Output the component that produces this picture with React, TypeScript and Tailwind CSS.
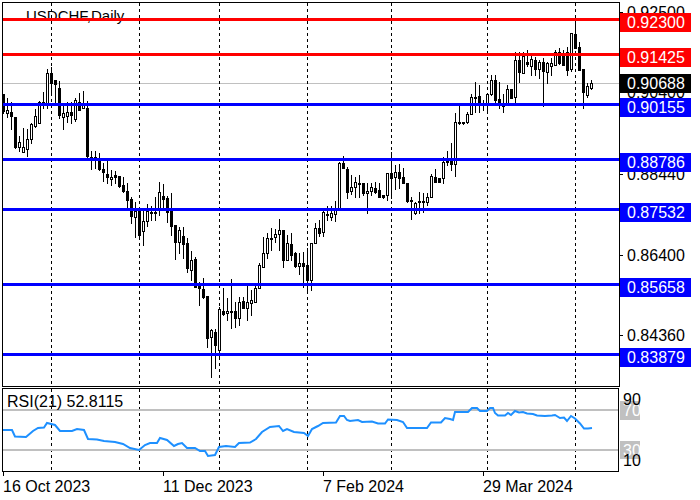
import React from "react";

// [high, bodyTop, bodyBottom, low, filled] in page pixels, first candle at x=3, then every 4px
type Candle = [number, number, number, number, number];

const candles: Candle[] = [
  [94, 94, 111, 113, 1], [98, 110, 113, 117, 0], [102, 112, 116, 129, 1], [117, 117, 147, 148, 1],
  [136, 142, 147, 151, 0], [128, 147, 152, 152, 0], [129, 139, 149, 156, 0], [123, 124, 139, 143, 0],
  [109, 116, 126, 127, 0], [101, 102, 123, 123, 0], [92, 102, 105, 108, 0], [69, 73, 103, 108, 0],
  [67, 73, 83, 93, 1], [80, 80, 84, 102, 1], [81, 88, 115, 118, 1], [105, 113, 117, 129, 0],
  [102, 112, 116, 122, 0], [102, 112, 115, 123, 1], [98, 100, 119, 121, 0], [93, 102, 110, 110, 1],
  [91, 105, 108, 108, 0], [101, 108, 156, 157, 1], [151, 157, 159, 169, 1], [151, 157, 160, 168, 0],
  [153, 160, 169, 170, 1], [163, 169, 172, 181, 1], [160, 174, 177, 183, 1], [170, 177, 179, 185, 0],
  [171, 175, 177, 183, 1], [176, 176, 186, 187, 1], [177, 185, 191, 192, 1], [183, 191, 200, 207, 1],
  [197, 199, 216, 223, 1], [202, 211, 217, 237, 0], [209, 211, 235, 238, 1], [211, 221, 231, 245, 0],
  [204, 211, 221, 226, 0], [206, 212, 213, 220, 1], [197, 212, 213, 220, 1], [182, 192, 208, 215, 0],
  [184, 196, 199, 208, 1], [196, 198, 212, 222, 1], [193, 211, 226, 235, 1], [225, 225, 242, 259, 1],
  [227, 230, 242, 253, 0], [227, 236, 244, 258, 1], [238, 243, 268, 272, 1], [251, 260, 270, 280, 0],
  [257, 259, 287, 287, 1], [282, 285, 288, 305, 1], [278, 289, 297, 298, 1], [296, 296, 338, 347, 1],
  [329, 330, 337, 377, 0], [329, 332, 345, 368, 1], [307, 309, 350, 357, 0], [288, 311, 314, 315, 1],
  [298, 311, 313, 320, 0], [279, 311, 312, 328, 1], [302, 311, 318, 327, 1], [297, 302, 318, 325, 0],
  [297, 301, 308, 308, 1], [286, 302, 308, 320, 0], [290, 300, 303, 315, 0], [286, 288, 302, 302, 0],
  [263, 265, 288, 288, 0], [237, 253, 267, 267, 0], [233, 238, 253, 258, 0], [228, 238, 239, 250, 1],
  [229, 234, 237, 242, 0], [219, 230, 234, 250, 0], [230, 230, 260, 267, 1], [235, 243, 260, 260, 0],
  [233, 244, 255, 260, 1], [252, 253, 266, 267, 1], [253, 263, 266, 274, 0], [252, 263, 266, 287, 1],
  [248, 265, 280, 290, 1], [243, 243, 280, 290, 0], [223, 228, 243, 243, 0], [220, 228, 233, 236, 1],
  [211, 212, 232, 236, 0], [206, 214, 215, 220, 1], [206, 213, 217, 220, 0], [201, 210, 214, 221, 0],
  [162, 163, 208, 210, 0], [156, 163, 168, 168, 1], [167, 169, 192, 198, 1], [175, 187, 191, 194, 0],
  [177, 182, 187, 197, 0], [175, 183, 184, 197, 1], [183, 183, 193, 195, 1], [183, 191, 193, 213, 0],
  [183, 187, 191, 195, 0], [182, 188, 192, 193, 1], [183, 190, 197, 197, 1], [195, 195, 197, 198, 1],
  [173, 173, 195, 200, 0], [152, 173, 178, 198, 1], [165, 172, 177, 189, 0], [164, 172, 178, 188, 1],
  [168, 177, 183, 183, 1], [183, 183, 201, 202, 1], [197, 200, 201, 219, 1], [202, 203, 213, 214, 0],
  [192, 201, 202, 213, 1], [193, 201, 202, 212, 1], [193, 197, 202, 205, 0], [174, 176, 197, 197, 0],
  [169, 177, 182, 182, 1], [178, 178, 182, 182, 1], [157, 162, 178, 183, 0], [151, 161, 162, 165, 1],
  [143, 161, 164, 170, 1], [113, 122, 164, 176, 0], [106, 122, 123, 124, 1], [122, 122, 123, 124, 1],
  [112, 114, 122, 123, 0], [94, 97, 114, 114, 0], [82, 97, 98, 112, 1], [85, 96, 103, 112, 1],
  [100, 103, 105, 110, 1], [93, 94, 105, 111, 0], [75, 80, 94, 95, 0], [75, 80, 100, 102, 1],
  [82, 99, 105, 108, 1], [94, 105, 106, 112, 1], [85, 89, 105, 105, 0], [89, 89, 98, 98, 1],
  [52, 60, 97, 102, 0], [52, 60, 72, 82, 1], [52, 56, 73, 73, 0], [50, 62, 64, 66, 1],
  [55, 59, 66, 75, 0], [57, 60, 69, 75, 1], [60, 62, 69, 78, 0], [58, 62, 71, 106, 1],
  [62, 63, 72, 83, 0], [58, 63, 66, 75, 0], [50, 52, 65, 65, 0], [48, 52, 63, 64, 1],
  [50, 55, 65, 65, 1], [47, 52, 70, 75, 1], [33, 33, 69, 71, 0], [21, 34, 48, 48, 1],
  [42, 47, 70, 70, 1], [69, 69, 92, 108, 1], [83, 86, 95, 97, 0], [80, 83, 88, 89, 0],
];

const rsiPoints =
  "3,430 12,430 15,436.5 26,437 33,431 38,428 44,427.5 47,423 55,425 60,431 66,431 72,431 77,429 84,430 88,439 97,439.5 104,441 115,442 123,444 130,448 139,450 145,445 150,443 157,443 160,438 167,440 174,446 178,444 182,443 187,448 195,448 200,451 205,451 208,456 215,455 219,447 226,446 235,447 239,443 250,442.5 256,439 262,432 270,427 279,426 283,431 287,429 294,432 304,433 308,436 312,429 318,426 323,423 336,422.5 340,416 344,416 347,420 350,421 358,420 362,422 372,421.5 378,423.5 385,423.5 388,419.5 397,420 403,422 407,428 427,428 431,422.5 441,422.5 445,418 450,419 453,420 455,412 468,412 472,408 477,408 480,411 487,411 490,408 493,408 495,413 498,415.5 505,415.5 508,413 511,415 515,411 519,412.5 523,412 527,413.5 533,414 537,415.5 545,416 552,415.5 555,415 560,418 564,417.5 567,421 571,416 575,418.5 580,423.5 584,428.5 588,428.5 592,428";

const dashes = [51, 139, 219, 307, 391, 487, 575];

const levels = [
  { y: 18, color: "#ff0000" },
  { y: 53, color: "#ff0000" },
  { y: 103, color: "#0000ff" },
  { y: 158, color: "#0000ff" },
  { y: 208, color: "#0000ff" },
  { y: 283, color: "#0000ff" },
  { y: 353, color: "#0000ff" },
];

const axisPrices = [
  { y: 12, text: "0.92500" },
  { y: 92, text: "0.90400" },
  { y: 174, text: "0.88440" },
  { y: 255, text: "0.86400" },
  { y: 335, text: "0.84360" },
];

const priceTags = [
  { y: 13, text: "0.92300", bg: "bg-[#ff0000]" },
  { y: 48, text: "0.91425", bg: "bg-[#ff0000]" },
  { y: 74, text: "0.90688", bg: "bg-black" },
  { y: 98, text: "0.90155", bg: "bg-[#0000ff]" },
  { y: 153, text: "0.88786", bg: "bg-[#0000ff]" },
  { y: 203, text: "0.87532", bg: "bg-[#0000ff]" },
  { y: 278, text: "0.85658", bg: "bg-[#0000ff]" },
  { y: 348, text: "0.83879", bg: "bg-[#0000ff]" },
];

const dates = ["16 Oct 2023", "11 Dec 2023", "7 Feb 2024", "29 Mar 2024"];

const DashedLines = ({ top, bottom }: { top: number; bottom: number }) => (
  <>
    {dashes.map((x) => (
      <line key={x} x1={x + 0.5} x2={x + 0.5} y1={top} y2={bottom} stroke="#000" strokeDasharray="3 3" />
    ))}
  </>
);

const CandleMark = ({ candle, x }: { candle: Candle; x: number }) => {
  const [high, top, bottom, low, filled] = candle;
  return (
    <g>
      <line x1={x + 0.5} x2={x + 0.5} y1={high} y2={low + 1} stroke="#000" />
      {filled ? (
        <rect x={x - 1} y={top} width={3} height={bottom - top + 1} fill="#000" />
      ) : (
        <rect x={x - 0.5} y={top + 0.5} width={2} height={bottom - top} fill="#fff" stroke="#000" />
      )}
    </g>
  );
};

export default function App() {
  return (
    <div className="h-[500px] w-[700px] overflow-hidden bg-white pl-[2px] pt-[2px] font-['Liberation_Sans',sans-serif] text-[16px] leading-[19px] text-black">
      <div className="flex h-[385px]">
        <div className="relative h-[385px] w-[618px] border border-black">
          <span className="absolute left-[23px] top-[3px] text-[15px]">USDCHF,Daily</span>
          <svg className="absolute inset-0" width={616} height={383} viewBox="3 3 616 383" shapeRendering="crispEdges">
            <line x1={3} x2={619} y1={83.5} y2={83.5} stroke="#c0c0c0" />
            <DashedLines top={3} bottom={386} />
            {candles.map((c, i) => (
              <CandleMark key={i} candle={c} x={3 + i * 4} />
            ))}
            {levels.map((l) => (
              <rect key={l.y} x={3} y={l.y} width={616} height={3} fill={l.color} />
            ))}
          </svg>
        </div>
        <div className="relative w-[80px]">
          {axisPrices.map((p) => (
            <div key={p.y}>
              <div className="absolute left-0 h-px w-[3px] bg-black" style={{ top: p.y - 2 }} />
              <span className="absolute left-[7px]" style={{ top: p.y - 11 }}>
                {p.text}
              </span>
            </div>
          ))}
          {priceTags.map((t) => (
            <span
              key={t.y}
              className={`absolute left-0 h-[19px] w-[71px] pl-[7px] text-white ${t.bg}`}
              style={{ top: t.y - 2 }}
            >
              {t.text}
            </span>
          ))}
        </div>
      </div>

      <div className="mt-px flex h-[84px]">
        <div className="relative h-[84px] w-[617px] border border-black">
          <svg className="absolute inset-0" width={615} height={82} viewBox="3 389 615 82" shapeRendering="crispEdges">
            <DashedLines top={389} bottom={471} />
            <rect x={3} y={409} width={615} height={2} fill="#c0c0c0" />
            <rect x={3} y={449} width={615} height={2} fill="#c0c0c0" />
            <polyline
              points={rsiPoints}
              fill="none"
              stroke="#1e90ff"
              strokeWidth={2}
              shapeRendering="auto"
            />
          </svg>
          <span className="absolute left-[4px] top-[3px]">RSI(21) 52.8115</span>
        </div>
        <div className="relative w-[81px]">
          <span className="absolute left-[1px] top-[13px] h-[19px] w-[20px] bg-[#c0c0c0] pl-[3px] text-white">70</span>
          <span className="absolute left-[1px] top-[53px] h-[18px] w-[20px] bg-[#c0c0c0] pl-[3px] text-white">30</span>
          <span className="absolute left-[4px] top-[2px]">90</span>
          <span className="absolute left-[4px] top-[63px]">10</span>
        </div>
      </div>

      <div className="ml-px flex">
        {dates.map((d) => (
          <div key={d} className="flex w-[160px] flex-col">
            <div className="h-[4px] w-px bg-black" />
            <span className="mt-[1px]">{d}</span>
          </div>
        ))}
      </div>
    </div>
  );
}
